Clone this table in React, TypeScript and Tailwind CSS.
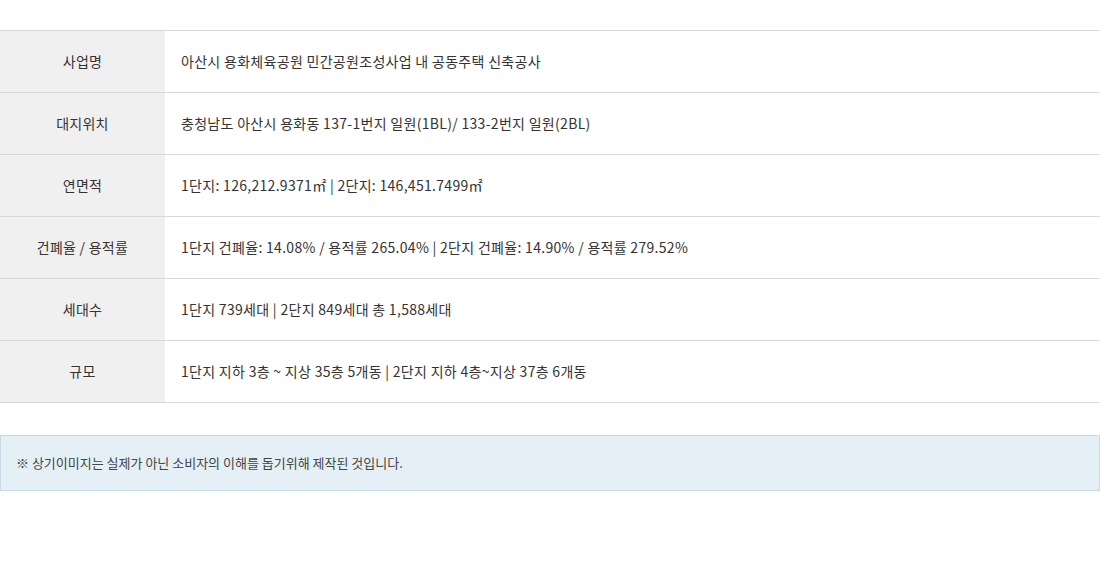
const rows: { label: string; value: React.ReactNode }[] = [
  { label: '사업명', value: '아산시 용화체육공원 민간공원조성사업 내 공동주택 신축공사' },
  { label: '대지위치', value: '충청남도 아산시 용화동 137-1번지 일원(1BL)/ 133-2번지 일원(2BL)' },
  { label: '연면적', value: '1단지: 126,212.9371㎡ | 2단지: 146,451.7499㎡' },
  { label: '건폐율 / 용적률', value: '1단지 건폐율: 14.08% / 용적률 265.04% | 2단지 건폐율: 14.90% / 용적률 279.52%' },
  { label: '세대수', value: '1단지 739세대 | 2단지 849세대 총 1,588세대' },
  { label: '규모', value: '1단지 지하 3층 ~ 지상 35층 5개동 | 2단지 지하 4층~지상 37층 6개동' },
];

export default function App() {
  return (
    <div className="min-h-[569px] bg-white pt-[30px] font-['Noto_Sans_CJK_KR','Noto_Sans',sans-serif] text-[#333]">
      <table className="w-full border-collapse border-t border-[#d9d9d9]">
        <tbody>
          {rows.map((row) => (
            <tr key={row.label} className="h-[62px] border-b border-[#d9d9d9]">
              <th className="w-[165px] bg-[#f0f0f0] text-center text-[14px] font-normal tracking-[0.25px] text-[#333]">
                {row.label}
              </th>
              <td className="px-4 text-[14px] tracking-[0.3px]">{row.value}</td>
            </tr>
          ))}
        </tbody>
      </table>

      <div className="mt-8 flex h-14 items-center border border-[#c7dbe6] bg-[#e5f0f6] px-[15px] text-[13px] text-[#444]">
        ※ 상기이미지는 실제가 아닌 소비자의 이해를 돕기위해 제작된 것입니다.
      </div>
    </div>
  );
}
